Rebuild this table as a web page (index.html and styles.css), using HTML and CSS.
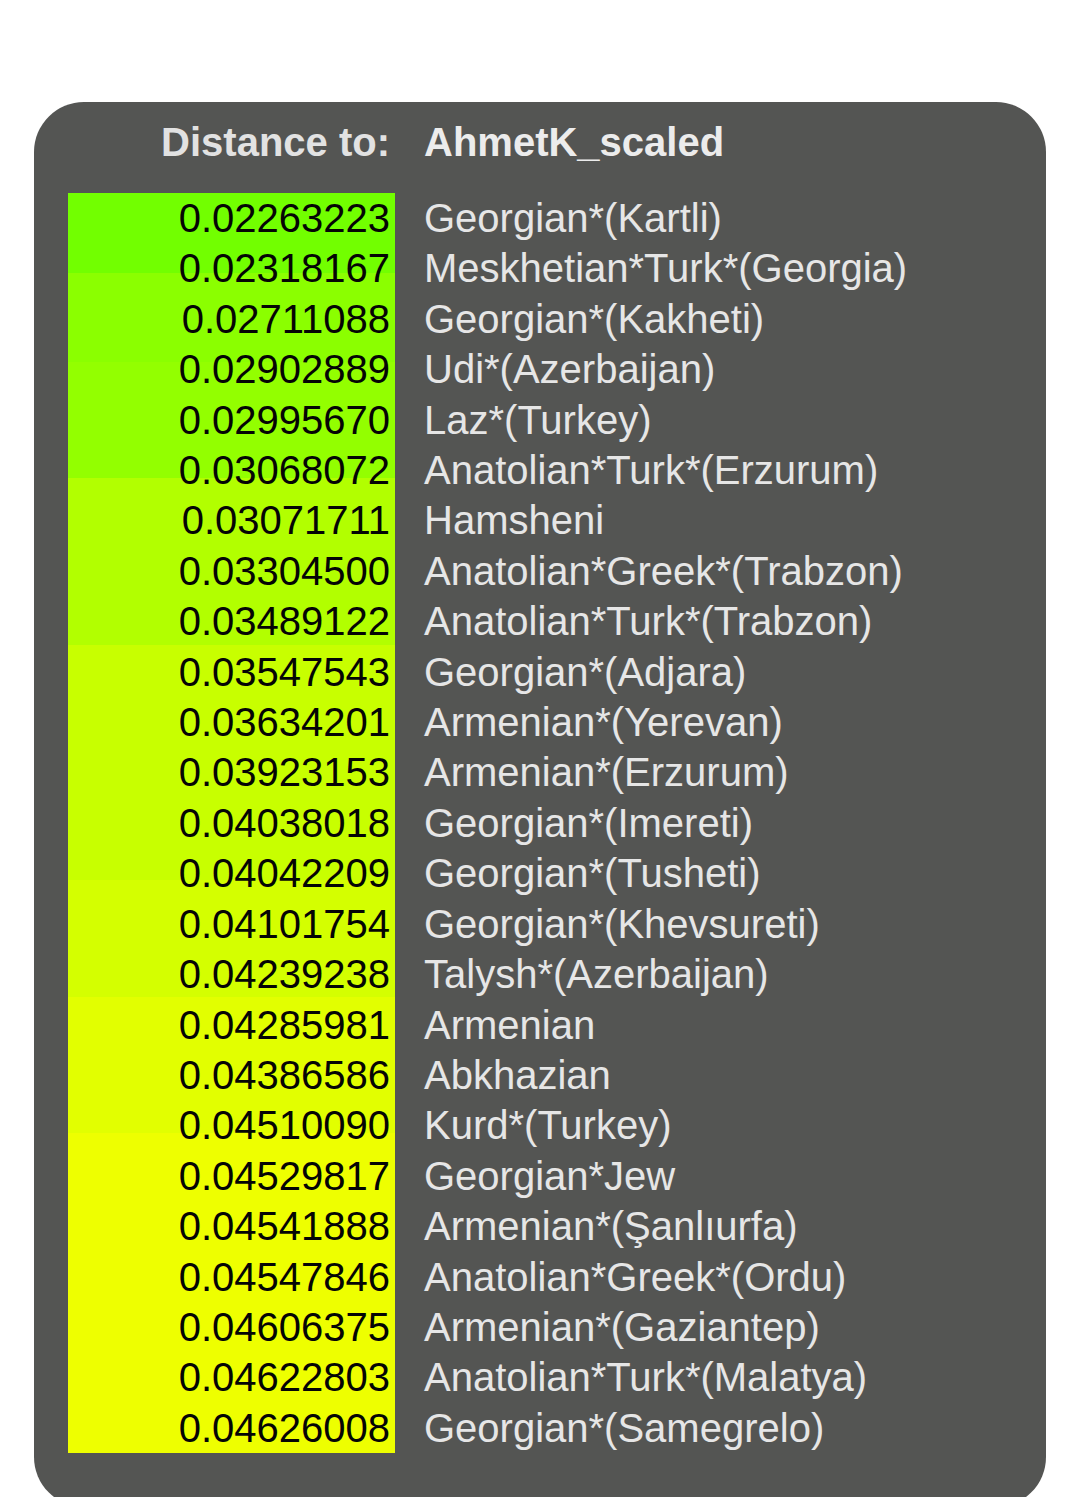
FILE: index.html
```html
<!DOCTYPE html>
<html lang="en">
<head>
<meta charset="utf-8">
<title>Distance to: AhmetK_scaled</title>
<link rel="stylesheet" href="styles.css">
</head>
<body>
<div class="card">
  <div class="head">
    <div class="head-label">Distance to:</div>
    <div class="head-title">AhmetK_scaled</div>
  </div>
  <div class="table">
    <div class="values">
      <div class="list">
        <div class="val">0.02263223</div>
        <div class="val">0.02318167</div>
        <div class="val">0.02711088</div>
        <div class="val">0.02902889</div>
        <div class="val">0.02995670</div>
        <div class="val">0.03068072</div>
        <div class="val">0.03071711</div>
        <div class="val">0.03304500</div>
        <div class="val">0.03489122</div>
        <div class="val">0.03547543</div>
        <div class="val">0.03634201</div>
        <div class="val">0.03923153</div>
        <div class="val">0.04038018</div>
        <div class="val">0.04042209</div>
        <div class="val">0.04101754</div>
        <div class="val">0.04239238</div>
        <div class="val">0.04285981</div>
        <div class="val">0.04386586</div>
        <div class="val">0.04510090</div>
        <div class="val">0.04529817</div>
        <div class="val">0.04541888</div>
        <div class="val">0.04547846</div>
        <div class="val">0.04606375</div>
        <div class="val">0.04622803</div>
        <div class="val">0.04626008</div>
      </div>
    </div>
    <div class="names">
      <div class="list">
        <div class="name">Georgian*(Kartli)</div>
        <div class="name">Meskhetian*Turk*(Georgia)</div>
        <div class="name">Georgian*(Kakheti)</div>
        <div class="name">Udi*(Azerbaijan)</div>
        <div class="name">Laz*(Turkey)</div>
        <div class="name">Anatolian*Turk*(Erzurum)</div>
        <div class="name">Hamsheni</div>
        <div class="name">Anatolian*Greek*(Trabzon)</div>
        <div class="name">Anatolian*Turk*(Trabzon)</div>
        <div class="name">Georgian*(Adjara)</div>
        <div class="name">Armenian*(Yerevan)</div>
        <div class="name">Armenian*(Erzurum)</div>
        <div class="name">Georgian*(Imereti)</div>
        <div class="name">Georgian*(Tusheti)</div>
        <div class="name">Georgian*(Khevsureti)</div>
        <div class="name">Talysh*(Azerbaijan)</div>
        <div class="name">Armenian</div>
        <div class="name">Abkhazian</div>
        <div class="name">Kurd*(Turkey)</div>
        <div class="name">Georgian*Jew</div>
        <div class="name">Armenian*(Şanlıurfa)</div>
        <div class="name">Anatolian*Greek*(Ordu)</div>
        <div class="name">Armenian*(Gaziantep)</div>
        <div class="name">Anatolian*Turk*(Malatya)</div>
        <div class="name">Georgian*(Samegrelo)</div>
      </div>
    </div>
  </div>
</div>
</body>
</html>
```

FILE: styles.css
```css
html, body {
  margin: 0;
  padding: 0;
  background: #ffffff;
  overflow: hidden;
}

body {
  font-family: "Liberation Sans", Arial, sans-serif;
  height: 1497px;
}

.card {
  margin: 102px 0 0 34px;
  width: 1012px;
  height: 1405px;
  box-sizing: border-box;
  background: #545553;
  border-radius: 50px;
  padding: 15px 0 0 34px;
}

.head {
  display: flex;
  gap: 29px;
  font-size: 40px;
  font-weight: bold;
  line-height: 50px;
  color: #e2e2e2;
  margin-bottom: 26px;
}

.head-label {
  width: 327px;
  box-sizing: border-box;
  padding-right: 5px;
  text-align: right;
}

.head-title {
  color: #ececec;
}

.table {
  display: flex;
  gap: 29px;
  font-size: 40px;
  line-height: 50.4px;
}

.values {
  width: 327px;
  height: 1260px;
  box-sizing: border-box;
  padding-right: 5px;
  text-align: right;
  color: #050505;
  background: linear-gradient(to bottom,
    #72ff00 0px, #72ff00 80px,
    #8bff00 80px, #8bff00 169px,
    #93ff00 169px, #93ff00 285px,
    #b2ff00 285px, #b2ff00 452px,
    #c8ff00 452px, #c8ff00 687px,
    #d4ff00 687px, #d4ff00 804px,
    #e2ff00 804px, #e2ff00 940px,
    #eeff00 940px, #eeff00 1260px);
}

.names {
  color: #e6e6e6;
}
```
